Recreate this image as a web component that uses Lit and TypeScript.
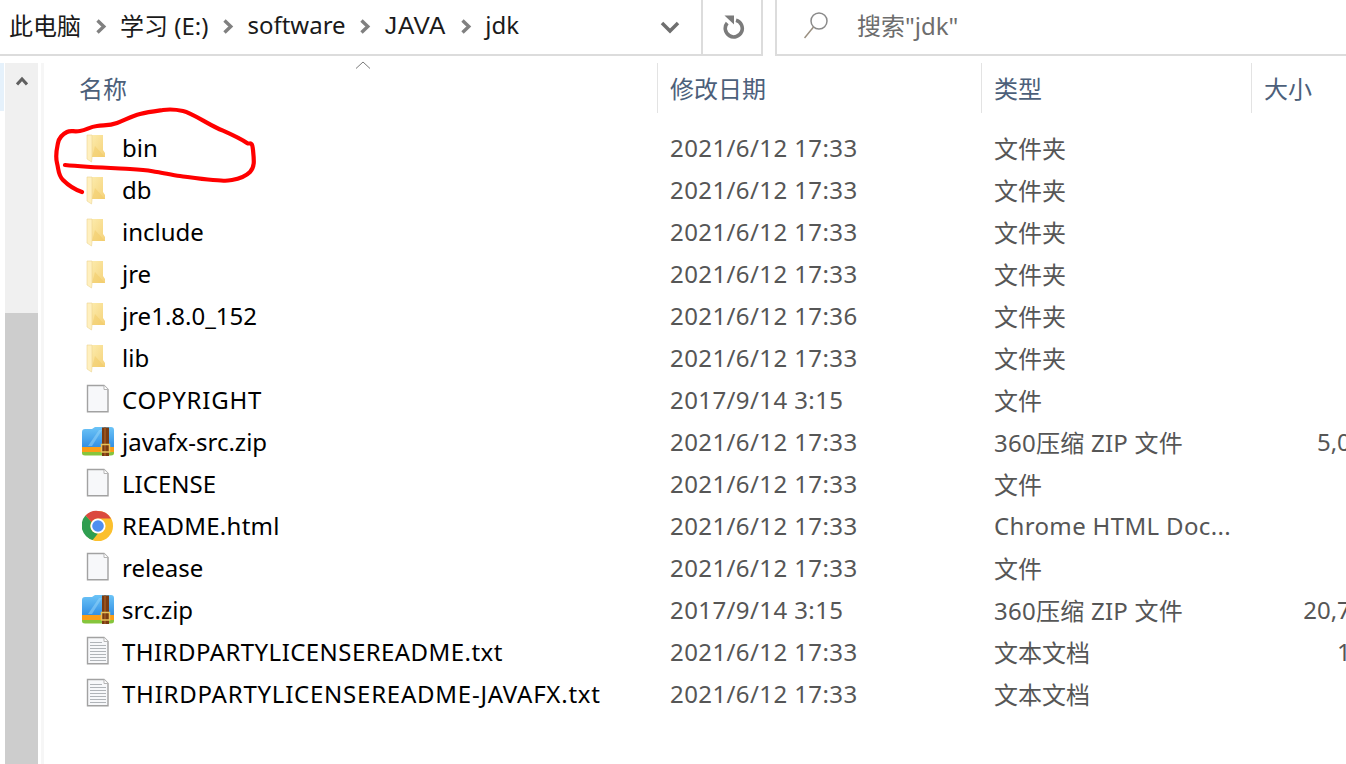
import { LitElement, html, css, svg } from "lit";
import { customElement } from "lit/decorators.js";

const folder = svg`<svg class="ic" viewBox="0 0 32 32" width="32" height="32">
<defs><linearGradient id="fg" x1="0" y1="0" x2="1" y2="1"><stop offset="0" stop-color="#fcebab"/><stop offset="1" stop-color="#f5d27a"/></linearGradient></defs>
<path d="M10 3H21V18L23 21V25H10Z" fill="url(#fg)"/><path d="M13 14L23 25H10Z" fill="#f0c860" opacity=".45"/>
<path d="M5 3L10 3V26L9.500 30L5 27Z" fill="#fff0bf" stroke="#ecd592" stroke-width=".6"/></svg>`;

const blank = svg`<svg class="ic" viewBox="0 0 32 32" width="32" height="32">
<path d="M5.500 1.500H22L26 5.500V27.800H5.500Z" fill="#f7f8fa" stroke="#a2a2a2" stroke-width="1.400"/><path d="M22 1.500V5.500H26" fill="#fff" stroke="#b5b5b5" stroke-width="1"/></svg>`;

const textDoc = svg`<svg class="ic" viewBox="0 0 32 32" width="32" height="32">
<path d="M5.500 1.500H22L26 5.500V27.800H5.500Z" fill="#f7f8fa" stroke="#a2a2a2" stroke-width="1.400"/><path d="M22 1.500V5.500H26" fill="#fff" stroke="#b5b5b5" stroke-width="1"/>
<path d="M8 6.500H20M8 9.500H24M8 12.500H24M8 15.500H24M8 18.500H24M8 21.500H24M8 24.500H24" stroke="#b0b4b8" stroke-width="1.100"/></svg>`;

const zip = svg`<svg class="ic" viewBox="0 0 32 32" width="32" height="32">
<defs><linearGradient id="zg" x1="0" y1="0" x2="0" y2="1"><stop offset="0" stop-color="#6cc4f7"/><stop offset="1" stop-color="#3390e4"/></linearGradient></defs>
<path d="M0 6Q0 3 3 3H10L13 1H29Q32 1 32 4V21H0Z" fill="url(#zg)"/>
<path d="M6 20L17 4H20L10 20Z" fill="#9ad8fa" opacity=".5"/>
<path d="M0 21H32V26H0Z" fill="#fb9e18"/><path d="M0 26H32V27Q32 29.500 29 29.500H3Q0 29.500 0 27Z" fill="#86c53c"/>
<path d="M20 1.500H27V30H20Z" fill="#7a3b12"/><path d="M22 1.500H24V30H22Z" fill="#96521f"/>
<rect x="19.500" y="18.500" width="8" height="7.500" fill="none" stroke="#e7c35b" stroke-width="1.500"/></svg>`;

const chrome = svg`<svg class="ic" viewBox="-0.5 -0.5 33 33" width="32" height="32">
<circle cx="16" cy="16" r="15.500" fill="#fbc02d"/>
<path d="M16 .5A15.500 15.500 0 0 1 29.400 8.200L16 8.200A7.800 7.800 0 0 0 9.200 12L3 5.300A15.500 15.500 0 0 1 16 .5Z" fill="#db4a3f"/>
<path d="M3 5.300L9.200 12A7.800 7.800 0 0 0 16 23.800L10.500 30.500A15.500 15.500 0 0 1 3 5.300Z" fill="#2f9e50"/>
<circle cx="16" cy="16" r="7.800" fill="#fff"/><circle cx="16" cy="16" r="6" fill="#4f8ef0"/></svg>`;

type Row = { n: string; d: string; t: string; s?: string; i: unknown; c?: string; tc?: string };
const F = "文件夹";
const D = "2021/6/12 17:33";
const rows: Row[] = [
  { n: "bin", d: D, t: F, i: folder },
  { n: "db", d: D, t: F, i: folder },
  { n: "include", d: D, t: F, i: folder },
  { n: "jre", d: D, t: F, i: folder },
  { n: "jre1.8.0_152", d: "2021/6/12 17:36", t: F, i: folder },
  { n: "lib", d: D, t: F, i: folder },
  { n: "COPYRIGHT", d: "2017/9/14 3:15", t: "文件", i: blank, c: "caps" },
  { n: "javafx-src.zip", d: D, t: "360压缩 ZIP 文件", s: "5,014 KB", i: zip, tc: "sp" },
  { n: "LICENSE", d: D, t: "文件", i: blank },
  { n: "README.html", d: D, t: "Chrome HTML Doc...", i: chrome, c: "mid", tc: "wide" },
  { n: "release", d: D, t: "文件", i: blank },
  { n: "src.zip", d: "2017/9/14 3:15", t: "360压缩 ZIP 文件", s: "20,714 KB", i: zip, tc: "sp" },
  { n: "THIRDPARTYLICENSEREADME.txt", d: D, t: "文本文档", s: "146 KB", i: textDoc, c: "thin" },
  { n: "THIRDPARTYLICENSEREADME-JAVAFX.txt", d: D, t: "文本文档", i: textDoc, c: "caps" },
];

const crumbs = ["此电脑", "学习 (E:)", "software", "JAVA", "jdk"];
const chevron = svg`<svg class="sep" viewBox="0 0 12 15" width="12" height="15"><path d="M2.500 1.500L8.800 7.500L2.500 13.500" fill="none" stroke="#808080" stroke-width="3.400"/></svg>`;

@customElement("app-root")
export class AppRoot extends LitElement {
  static styles = css`
    :host { display: block; position: relative; width: 1346px; height: 764px; overflow: hidden; background: #fff;
      font-family: "Noto Sans", "Noto Sans CJK SC", sans-serif; font-size: 24px; color: #000; }
    .top { display: flex; align-items: stretch; height: 56px; }
    .crumbs { width: 701px; box-sizing: border-box; display: flex; align-items: center; gap: 13.500px; padding: 0 0 5px 9px;
      border-bottom: 2px solid #dcdcdc; color: #1a1a1a; position: relative; white-space: nowrap; }
    .crumbs .dd { position: absolute; right: 21px; top: 20px; }
    .crumbs .sep { margin-top: 4px; }
    .crumbs .upper { font-family: "Liberation Sans", sans-serif; font-size: 24.500px; letter-spacing: 1px; padding-top: 2px; }
    .refresh { width: 62px; display: flex; align-items: center; justify-content: center; box-sizing: border-box; padding: 0 0 3px 3px;
      border-left: 2px solid #dcdcdc; border-right: 2px solid #dcdcdc; border-bottom: 2px solid #dcdcdc; }
    .gap { width: 12px; }
    .search { flex: 1; display: flex; align-items: center; box-sizing: border-box; padding: 0 0 5px 27px; gap: 27px;
      border-left: 2px solid #dcdcdc; border-bottom: 2px solid #dcdcdc; color: #6d6d6d; }
    .main { display: flex; margin-top: 7px; }
    .rail { width: 4px; margin-right: 1px; height: 48px; background: #e5f1fb; flex: none; }
    .scroll { width: 33px; height: 701px; background: #f0f0f0; flex: none; display: flex; flex-direction: column; align-items: center; }
    .scroll .up { height: 250px; width: 100%; display: flex; justify-content: center; padding-top: 13px; box-sizing: border-box; }
    .scroll .thumb { flex: 1; width: 100%; background: #cdcdcd; }
    .line { width: 3px; margin-left: 3px; margin-right: 1px; height: 701px; background: #f6f6f6; flex: none; }
    .list { flex: none; width: 1500px; }
    .head, .row { display: grid; grid-template-columns: 612px 324px 270px 164px; }
    .head { height: 50px; color: #4c607a; align-items: center; position: relative; }
    .head div { height: 100%; display: flex; align-items: center; padding: 0 0 2px 12px; box-sizing: border-box; border-left: 1px solid #e3e3e3; }
    .head div:first-child { border-left: none; padding-left: 34px; }
    .caret { position: absolute; left: 310px; top: -2px; }
    .rows { margin-top: 14px; }
    .row { height: 42px; align-items: center; white-space: nowrap; color: #565656; }
    .name { display: flex; align-items: center; padding-left: 37px; color: #000; gap: 8px; }
    .name span { padding-bottom: 2px; }
    .name .caps { letter-spacing: .76px; }
    .name .thin { letter-spacing: .44px; }
    .name .mid { letter-spacing: .27px; }
    .ic { flex: none; }
    .date { padding: 0 0 2px 13px; letter-spacing: .4px; }
    .type { padding: 0 0 2px 13px; }
    .type.sp { letter-spacing: .25px; }
    .type.wide { letter-spacing: .35px; }
    .size-v { text-align: right; padding-bottom: 2px; }
    .scribble { position: absolute; left: 0; top: 0; pointer-events: none; }
  `;

  render() {
    return html`
      <div class="top">
        <div class="crumbs">
          ${crumbs.map((c, i) => html`${i ? chevron : ""}<span class=${c === "JAVA" ? "upper" : ""}>${c}</span>`)}
          <svg class="dd" viewBox="0 0 20 14" width="20" height="14"><path d="M2 3L10 11L18 3" fill="none" stroke="#6f6f6f" stroke-width="3.500"/></svg>
        </div>
        <div class="refresh">
          <svg viewBox="0 0 24 26" width="24" height="26"><path d="M14 7.200A8.500 8.500 0 1 1 5.200 10" fill="none" stroke="#7b7b7b" stroke-width="3.600"/><path d="M2.500 2.500H12V11.500Z" fill="#7b7b7b"/></svg>
        </div>
        <div class="gap"></div>
        <div class="search">
          <svg viewBox="0 0 26 30" width="26" height="30"><circle cx="15" cy="11" r="8" fill="none" stroke="#8a8a8a" stroke-width="1.500"/><path d="M9.500 17L0.500 28" fill="none" stroke="#9a8f80" stroke-width="1.500"/></svg>
          <span>搜索"jdk"</span>
        </div>
      </div>
      <div class="main">
        <div class="rail"></div>
        <div class="scroll">
          <div class="up"><svg viewBox="0 0 12 10" width="12" height="10"><path d="M1 8.500L6 3L11 8.500" fill="none" stroke="#606060" stroke-width="3"/></svg></div>
          <div class="thumb"></div>
        </div>
        <div class="line"></div>
        <div class="list">
          <div class="head">
            <div>名称</div><div>修改日期</div><div>类型</div><div>大小</div>
            <svg class="caret" viewBox="0 0 16 8" width="16" height="8"><path d="M1 7.500L8 1L15 7.500" fill="none" stroke="#7a7a7a" stroke-width="1"/></svg>
          </div>
          <div class="rows">
            ${rows.map(r => html`<div class="row">
              <div class="name">${r.i}<span class=${r.c ?? ""}>${r.n}</span></div>
              <div class="date">${r.d}</div>
              <div class="type ${r.tc ?? ""}">${r.t}</div>
              <div class="size-v">${r.s ?? ""}</div>
            </div>`)}
          </div>
        </div>
      </div>
      <svg class="scribble" width="1346" height="764" viewBox="0 0 1346 764">
        <path d="M65 165C85 167 110 168 130 169S150 171 157 172S172 175 180 176S200 179 213 180S226 181 232 180S245 177 250 172S254 160 253 150S250 145 247 143C238 137 228 133 217 128S192 113 183 111S170 109 163 110S148 112 140 114S125 120 117 123S105 125 97 126S87 130 80 131S71 130 67 132S59 138 58 143S55 155 57 163S58 175 63 180S76 190 82 192"
          fill="none" stroke="#f00" stroke-width="4.200" stroke-linecap="round" stroke-linejoin="round"/>
      </svg>
    `;
  }
}
